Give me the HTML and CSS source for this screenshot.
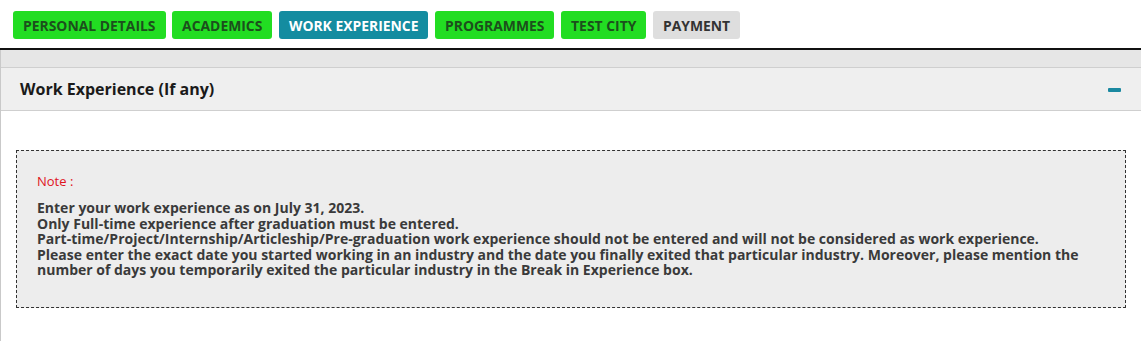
FILE: index.html
```html
<!DOCTYPE html>
<html>
<head>
<meta charset="utf-8">
<link rel="stylesheet" href="styles.css">
</head>
<body>
<nav class="tabs">
  <span class="tab done">PERSONAL DETAILS</span>
  <span class="tab done">ACADEMICS</span>
  <span class="tab active">WORK EXPERIENCE</span>
  <span class="tab done">PROGRAMMES</span>
  <span class="tab done">TEST CITY</span>
  <span class="tab todo">PAYMENT</span>
</nav>
<div class="page">
  <div class="band"></div>
  <section class="panel">
    <header class="panel-head">
      <h2 class="panel-title">Work Experience (If any)</h2>
      <span class="collapse"></span>
    </header>
    <div class="panel-body">
      <div class="note">
        <p class="note-label">Note :</p>
        <p class="note-text">Enter your work experience as on July 31, 2023.<br>
Only Full-time experience after graduation must be entered.<br>
Part-time/Project/Internship/Articleship/Pre-graduation work experience should not be entered and will not be considered as work experience.<br>
Please enter the exact date you started working in an industry and the date you finally exited that particular industry. Moreover, please mention the number of days you temporarily exited the particular industry in the Break in Experience box.</p>
      </div>
    </div>
  </section>
</div>
</body>
</html>
```

FILE: styles.css
```css
* { box-sizing: border-box; }
html, body { margin: 0; padding: 0; background: #fff; }
body {
  font-family: "Open Sans", "Liberation Sans", sans-serif;
  color: #333;
  width: 1141px;
  height: 341px;
  overflow: hidden;
}
.tabs {
  display: flex;
  gap: 6.6px;
  padding: 11px 13px 0;
  height: 50px;
  border-bottom: 2px solid #111;
}
.tab {
  display: flex;
  align-items: center;
  height: 28px;
  padding: 0 10px;
  border-radius: 3px;
  font-size: 13.9px;
  font-weight: 700;
}
.tab.done { background: #22dd22; color: #1c4f1c; }
.tab.active { background: #148ca0; color: #fff; }
.tab.todo { background: #dedede; color: #333; }
.page {
  border-left: 1px solid #c9c9c9;
  height: 291px;
}
.band {
  height: 18px;
  background: #e6e6e6;
  border-bottom: 1px solid #cfcfcf;
}
.panel-head {
  display: flex;
  align-items: center;
  justify-content: space-between;
  height: 43px;
  padding: 0 20px 0 19px;
  background: #efefef;
  border-bottom: 1px solid #cfcfcf;
}
.panel-title {
  margin: 0;
  font-size: 16px;
  font-weight: 700;
  color: #1a1a1a;
}
.collapse {
  width: 13px;
  height: 4px;
  border-radius: 1px;
  background: #1a88a0;
  margin-top: 1px;
}
.panel-body {
  padding: 39px 15px 0 15px;
}
.note {
  width: 1110px;
  height: 158px;
  background: #ededed;
  border: 1px dashed #333;
  padding: 21px 20px 0 20px;
}
.note-label {
  margin: 0 0 10px;
  font-size: 13px;
  line-height: 18px;
  color: #e0141e;
}
.note-text {
  margin: 0;
  font-size: 14px;
  font-weight: 700;
  line-height: 15.6px;
  color: #3a3a3a;
}
```
